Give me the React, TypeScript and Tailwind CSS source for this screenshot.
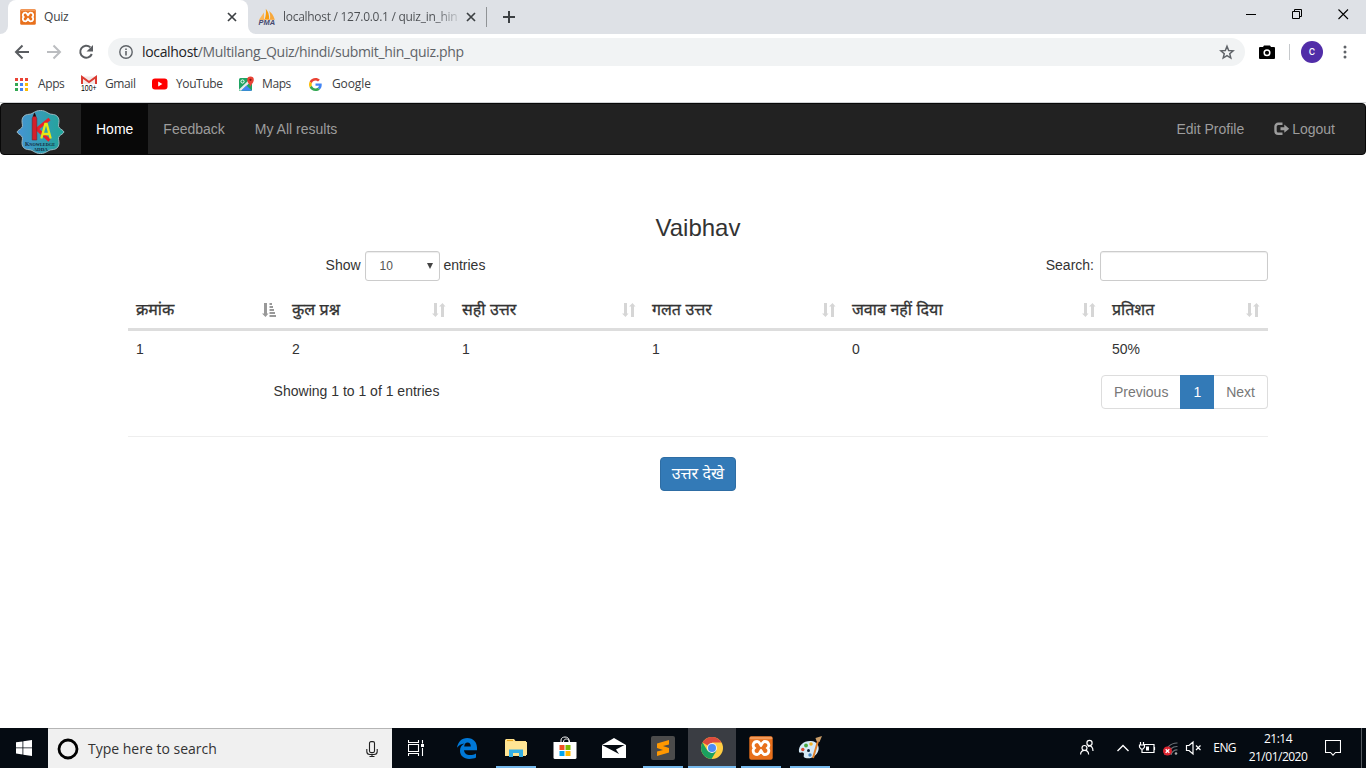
import React from "react";

const UI = "font-['Open_Sans','Noto_Sans',sans-serif]";

function XamppIcon({ className }: { className: string }) {
  return (
    <svg viewBox="0 0 24 24" className={className}>
      <rect x="0.3" y="0.3" width="23.4" height="23.4" rx="2" fill="#e8701c" />
      <rect x="0.8" y="0.8" width="22.4" height="2.5" rx="1" fill="#f39a5a" />
      <path
        d="M8.2 5.500C10.500 5.500 10.800 7.800 12 9.300 13.200 7.800 13.500 5.500 15.800 5.500 20 5.500 20.800 10 18.600 12 20.800 14 20 18.500 15.800 18.500 13.500 18.500 13.200 16.200 12 14.700 10.800 16.200 10.500 18.500 8.200 18.500 4 18.500 3.200 14 5.400 12 3.200 10 4 5.500 8.200 5.500z"
        fill="#e8701c"
        stroke="#fff"
        strokeWidth="2.800"
      />
      <path d="M9 12h6" stroke="#e8701c" strokeWidth="1.500" />
    </svg>
  );
}

function PmaIcon() {
  return (
    <svg viewBox="0 0 18 18" className="h-[18px] w-[18px] shrink-0 overflow-visible">
      <path d="M1.500 11L6 4.500V11z" fill="#fbb659" />
      <path d="M6.800 11C8 8 8.200 4 7.800.8 10.200 3.500 11.200 7 11.200 11z" fill="#f89c0e" />
      <path d="M12 11c.5-3 0-6-1-8 2.500 1.500 4.500 4.500 5.500 8z" fill="#f8a83b" />
      <path d="M1 11h16l-.6.900H1.600z" fill="#f7b45c" />
      <text x="0.500" y="17.300" fontSize="6.500" fontWeight="bold" fontStyle="italic" fontFamily="Liberation Sans" textLength="16.500" lengthAdjust="spacingAndGlyphs" fill="#45486f">PMA</text>
    </svg>
  );
}

function CloseX() {
  return (
    <svg viewBox="0 0 10 10" className="h-[10px] w-[10px] shrink-0">
      <path d="M1 1l8 8M9 1L1 9" stroke="#3c4043" strokeWidth="1.700" />
    </svg>
  );
}

function TabStrip() {
  return (
    <div className="flex h-[34px] bg-[#dee1e6]">
      <div className="w-2 bg-white">
        <div className="h-full rounded-br-lg bg-[#dee1e6]" />
      </div>
      <div className="flex w-[240px] items-center rounded-t-lg bg-white pl-3 pr-[11px]">
        <XamppIcon className="h-4 w-4" />
        <span className="ml-2 text-xs tracking-[-0.2px] text-[#3c4043]">Quiz</span>
        <span className="ml-auto"><CloseX /></span>
      </div>
      <div className="w-[238px] bg-white">
        <div className="flex h-full items-center rounded-bl-lg bg-[#dee1e6] pl-[10px]">
          <PmaIcon />
          <div className="ml-[7px] w-[176px] whitespace-nowrap bg-linear-to-r from-[#4a4d51] from-86% to-[#c8cbd0] bg-clip-text text-xs tracking-[-0.28px] text-transparent">
            localhost / 127.0.0.1 / quiz_in_hin
          </div>
          <span className="ml-[7px]"><CloseX /></span>
        </div>
      </div>
      <div className="mt-[7px] h-5 w-px bg-[#909396]" />
      <svg viewBox="0 0 12 12" className="ml-4 mt-[11px] h-3 w-3">
        <path d="M6 0v12M0 6h12" stroke="#3c4043" strokeWidth="2" />
      </svg>
      <div className="ml-auto flex pr-[17px]">
        <svg viewBox="0 0 103 34" className="h-[34px] w-[103px]" fill="none" stroke="#000">
          <path d="M0 14.500h10" />
          <path d="M46.500 11.500h7v7h-7zM48.500 11.500v-2h7v7h-2" />
          <path d="M92.500 9.500l9.500 9.500M102 9.500L92.500 19" strokeWidth="1.100" />
        </svg>
      </div>
    </div>
  );
}

function Toolbar() {
  return (
    <div className="flex h-9 items-center">
      <svg viewBox="0 0 108 28" className="h-7 w-[108px]" fill="none">
        <path d="M29 14H16.500M22.500 7.500L16 14l6.500 6.500" stroke="#5a5d61" strokeWidth="2" />
        <path d="M47 14h12.500M53.500 7.500L60 14l-6.500 6.500" stroke="#bbbdc0" strokeWidth="2" />
        <path d="M90.300 9.300A6 6 0 1 0 91.800 16" stroke="#5a5d61" strokeWidth="2" />
        <path d="M93 7v6.500h-6.500z" fill="#5a5d61" />
      </svg>
      <div className="flex h-7 w-[1137px] items-center rounded-full bg-[#f1f3f4] pl-[11px] pr-[10px]">
        <svg viewBox="0 0 14 14" className="h-[14px] w-[14px]" fill="none" stroke="#5f6368">
          <circle cx="7" cy="7" r="6.200" strokeWidth="1.400" />
          <path d="M7 6v4.500M7 3.500v1.400" strokeWidth="1.600" />
        </svg>
        <span className="ml-[9px] pb-px text-sm tracking-[-0.33px] text-[#5f6368]"><span className="text-[#202124]">localhost</span>/Multilang_Quiz/hindi/submit_hin_quiz.php</span>
        <svg viewBox="0 0 24 24" className="ml-auto h-4 w-4" fill="none" stroke="#5f6368" strokeWidth="2.200">
          <path d="M12 3.500l2.500 6.200 6.700.5-5.100 4.300 1.600 6.500-5.700-3.600-5.700 3.600 1.600-6.500-5.100-4.300 6.700-.5z" />
        </svg>
      </div>
      <svg viewBox="0 0 16 14" className="ml-[14px] h-[14px] w-4">
        <path d="M5 .5h6l1 1.500h3a1 1 0 0 1 1 1v10a1 1 0 0 1-1 1H1a1 1 0 0 1-1-1V3a1 1 0 0 1 1-1h3z" fill="#000" />
        <circle cx="8" cy="7.800" r="2.800" fill="none" stroke="#fff" strokeWidth="1.500" />
      </svg>
      <div className="ml-[14px] h-4 w-px bg-[#c6c9cc]" />
      <div className="ml-[11px] flex h-[22px] w-[22px] items-center justify-center rounded-full bg-[#512da8] pb-0.5 font-['Roboto',sans-serif] text-xs text-white">c</div>
      <svg viewBox="0 0 4 14" className="ml-5 h-[14px] w-1" fill="#5f6368">
        <circle cx="2" cy="2" r="1.500" /><circle cx="2" cy="7" r="1.500" /><circle cx="2" cy="12" r="1.500" />
      </svg>
    </div>
  );
}

function Bookmarks() {
  const dots = ["#ea4335", "#ea4335", "#ea4335", "#34a853", "#4285f4", "#fbbc05", "#34a853", "#4285f4", "#fbbc05"];
  const label = "text-xs tracking-[-0.4px]";
  return (
    <div className="flex h-[33px] items-center border-b border-[#d0d2d5] pb-1 pl-[15px] text-[#3c4043]">
      <div className="flex w-[66px] items-center">
        <svg viewBox="0 0 13 13" className="mr-[10px] h-[13px] w-[13px]">
          {dots.map((c, i) => <rect key={i} x={(i % 3) * 5} y={Math.floor(i / 3) * 5} width="3" height="3" fill={c} />)}
        </svg>
        <span className={label}>Apps</span>
      </div>
      <div className="flex w-[71px] items-center">
        <svg viewBox="0 0 16 16" className="mr-2 h-4 w-4 overflow-visible">
          <path d="M1 .5h14v7.500H1z" fill="#f3e9e8" />
          <path d="M1 8V1l7 5 7-5v7" fill="none" stroke="#dc3b31" strokeWidth="2" />
          <text x="0" y="15" fontSize="8.500" fontFamily="Liberation Sans" textLength="15.500" lengthAdjust="spacingAndGlyphs" fill="#000">100+</text>
        </svg>
        <span className={label}>Gmail</span>
      </div>
      <div className="flex w-[87px] items-center">
        <svg viewBox="0 0 16 12" className="mr-2 h-3 w-4">
          <rect y=".5" width="15.500" height="11" rx="3" fill="#f00" /><path d="M6.200 3.500v5l4.200-2.500z" fill="#fff" />
        </svg>
        <span className={label}>YouTube</span>
      </div>
      <div className="flex w-[70px] items-center">
        <svg viewBox="0 0 16 16" className="mr-[7px] h-4 w-4">
          <rect x="0" y="2" width="13" height="13" rx="1.500" fill="#1fa463" />
          <path d="M0 13.500L11 3l2 1.500L2 15z" fill="#e8eaed" />
          <path d="M7.500 9.500l5.500 5.300H2z" fill="#4285f4" />
          <circle cx="3.500" cy="5.500" r="1.600" fill="none" stroke="#fff" />
          <path d="M11.500 11C11 8 8.200 7 8.200 3.800a3.300 3.300 0 0 1 6.600 0C14.800 7 12 8 11.500 11z" fill="#ea4335" /><circle cx="11.500" cy="3.800" r="1.100" fill="#811411" />
        </svg>
        <span className={label}>Maps</span>
      </div>
      <div className="flex items-center">
        <svg viewBox="0 0 48 48" className="mr-[10px] h-[13px] w-[13px]">
          <path fill="#EA4335" d="M24 9.500c3.540 0 6.710 1.220 9.210 3.600l6.850-6.850C35.900 2.380 30.470 0 24 0 14.620 0 6.510 5.380 2.560 13.220l7.980 6.190C12.430 13.720 17.740 9.500 24 9.500z" />
          <path fill="#4285F4" d="M46.980 24.550c0-1.570-.15-3.090-.38-4.550H24v9.020h12.940c-.58 2.960-2.260 5.480-4.780 7.180l7.730 6c4.510-4.180 7.090-10.360 7.090-17.650z" />
          <path fill="#FBBC05" d="M10.530 28.590c-.48-1.450-.76-2.990-.76-4.590s.27-3.140.76-4.590l-7.980-6.190C.92 16.460 0 20.120 0 24c0 3.880.92 7.540 2.560 10.780l7.970-6.190z" />
          <path fill="#34A853" d="M24 48c6.480 0 11.930-2.130 15.890-5.810l-7.730-6c-2.150 1.450-4.920 2.300-8.160 2.300-6.260 0-11.570-4.220-13.470-9.910l-7.980 6.190C6.510 42.620 14.620 48 24 48z" />
        </svg>
        <span className="text-xs tracking-[-0.1px]">Google</span>
      </div>
    </div>
  );
}

function BrandLogo() {
  return (
    <svg viewBox="0 0 50 46" className="h-[46px] w-[50px]">
      <defs>
        <linearGradient id="brand"><stop offset="0" stopColor="#4694d4" /><stop offset="1" stopColor="#21a597" /></linearGradient>
      </defs>
      <path d="M25.500 1.500C31.500 1.500 32.500 5 37 5.300 41 5.500 43.700 7.500 44 11.500 44.200 15 42.500 17 44.500 19 46 20.500 48 21 49 23 48 25 46 25.500 44.500 27 42.500 29 44.200 31 44 34.500 43.700 38.500 41 40.500 37 40.700 32.500 41 31.500 44.500 25.500 44.500S18.500 41 14 40.700C10 40.500 7.300 38.500 7 34.500 6.800 31 8.500 29 6.500 27 5 25.500 3 25 2 23 3 21 5 20.500 6.500 19 8.500 17 6.800 15 7 11.500 7.300 7.500 10 5.500 14 5.300 18.500 5 19.500 1.500 25.500 1.500z" fill="url(#brand)" stroke="#9bb9c2" strokeWidth="1" />
      <path d="M34.500 10L22 20l12.500 11.500" fill="none" stroke="#e8202a" strokeWidth="3.200" />
      <path d="M17.200 9.500l2.300-5.500 2.300 5.500V31h-4.600z" fill="#d51f29" stroke="#71212b" strokeWidth=".6" /><path d="M18 7.500l1.500-4L21 7.500z" fill="#111" />
      <path d="M26.300 29.500l4-14.500h1.400l4 14.500M27.800 25h6.600" fill="none" stroke="#e6e817" strokeWidth="2.300" />
      <g fill="#14283a" fontFamily="Liberation Serif" fontWeight="bold">
        <text x="10" y="37" fontSize="5" textLength="30" lengthAdjust="spacingAndGlyphs"><tspan fontSize="6.500">K</tspan>NOWLEDGE</text>
        <text x="18.500" y="42" fontSize="4.800" textLength="14.500" lengthAdjust="spacingAndGlyphs">ADDA</text>
      </g>
    </svg>
  );
}

function Navbar() {
  return (
    <nav className="flex h-[52px] items-stretch rounded border border-[#080808] bg-[#222] text-sm leading-5 text-[#9d9d9d]">
      <div className="w-20 pl-[14px] pt-[5px]"><BrandLogo /></div>
      <a className="bg-[#080808] p-[15px] text-white">Home</a>
      <a className="p-[15px]">Feedback</a>
      <a className="p-[15px]">My All results</a>
      <a className="ml-auto p-[15px]">Edit Profile</a>
      <a className="flex items-center py-[15px] pl-[15px] pr-[30px]">
        <svg viewBox="0 0 16 14" className="mr-0.5 h-[14px] w-4" fill="#9d9d9d">
          <path d="M8.500 1.800H4.200A2.700 2.700 0 0 0 1.500 4.500v4.500a2.700 2.700 0 0 0 2.700 2.700h4.300" fill="none" stroke="#9d9d9d" strokeWidth="2.400" />
          <path d="M6.500 5.200h3.800V2.600L15.200 6.700l-4.900 4.100V8.200H6.500z" />
        </svg>
        Logout
      </a>
    </nav>
  );
}

function SortIcon({ active }: { active: boolean }) {
  return (
    <svg viewBox="0 0 14 14" className={active ? "h-[14px] w-[14px] fill-[#999]" : "h-[14px] w-[14px] fill-[#d6d6d6]"}>
      <path d="M2 0h3v10.500h1.500L3.500 14 0 10.500h2z" />
      {active
        ? <path d="M7.500 0h2.500v2H7.500zM7.500 3h3.500v2H7.500zM7.500 6h4.500v2H7.500zM7.500 9h5.500v2H7.500zM7.500 12H14v2H7.500z" />
        : <path d="M9 14h3V3.500h1.500L10.500 0 7 3.500h2z" />}
    </svg>
  );
}

const columns = [
  { title: "क्रमांक", value: "1" },
  { title: "कुल प्रश्न", value: "2" },
  { title: "सही उत्तर", value: "1" },
  { title: "गलत उत्तर", value: "1" },
  { title: "जवाब नहीं दिया", value: "0" },
  { title: "प्रतिशत", value: "50%" },
];
const grid = "grid grid-cols-[156px_170px_190px_200px_260px_164px]";

function Results() {
  return (
    <main className="ml-32 flex w-[1140px] flex-col pt-[60px] text-sm leading-5 text-[#333]">
      <h3 className="h-[36px] text-center text-2xl leading-[26px]">Vaibhav</h3>
      <div className="flex h-[30px] items-center">
        <div className="flex w-[555px] items-center justify-center whitespace-pre">
          <span className="pb-0.5">Show </span>
          <div className="flex h-[30px] w-[75px] items-center justify-between rounded-[3px] border border-[#ccc] pl-[14px] pr-[5px] text-xs text-[#555] shadow-[inset_0_1px_1px_rgba(0,0,0,.075)]">
            10
            <svg viewBox="0 0 8 8" className="h-2 w-2"><path d="M1 1h6L4 7z" fill="#444" /></svg>
          </div>
          <span className="pb-0.5"> entries</span>
        </div>
        <span className="ml-auto pb-0.5">Search:</span>
        <div className="ml-[6px] h-[30px] w-[168px] rounded-[3px] border border-[#ccc] shadow-[inset_0_1px_1px_rgba(0,0,0,.075)]" />
      </div>
      <div className={grid + " mt-[10px] h-[40px] border-b-[3px] border-[#ddd] text-base leading-5"}>
        {columns.map((c, i) => (
          <div key={c.title} className="flex justify-between pl-2 pr-2 pt-[9px]">
            <span className="whitespace-nowrap [-webkit-text-stroke:0.3px_#333]">{c.title}</span>
            <span className="pt-[3px]"><SortIcon active={i === 0} /></span>
          </div>
        ))}
      </div>
      <div className={grid + " h-[36px]"}>
        {columns.map((c) => <div key={c.title} className="p-2">{c.value}</div>)}
      </div>
      <div className="mt-2 flex h-[34px]">
        <div className="w-[457px] pt-[6px] text-center">Showing 1 to 1 of 1 entries</div>
        <div className="ml-auto flex text-[#777]">
          <div className="rounded-l border border-[#ddd] px-3 py-[6px]">Previous</div>
          <div className="-ml-px border border-[#337ab7] bg-[#337ab7] px-3 py-[6px] text-white">1</div>
          <div className="rounded-r border border-l-0 border-[#ddd] px-3 py-[6px]">Next</div>
        </div>
      </div>
      <hr className="mt-[27px] border-[#eee]" />
      <button className="mt-5 flex h-[34px] w-[76px] items-center justify-center self-center whitespace-nowrap rounded border border-[#2e6da4] bg-[#337ab7] text-base leading-5 text-white">उत्तर देखे</button>
    </main>
  );
}

function Slot({ children, bar, active }: { children: React.ReactNode; bar?: boolean; active?: boolean }) {
  return (
    <div className={active ? "flex h-10 w-12 flex-col items-center bg-[#3a3d43]" : "flex h-10 w-12 flex-col items-center"}>
      <div className="flex h-[38px] items-center pt-[2px]">{children}</div>
      <div className={bar ? (active ? "h-0.5 w-12 bg-[#76b9ed]" : "h-0.5 w-10 bg-[#76b9ed]") : "h-0.5"} />
    </div>
  );
}

function Taskbar() {
  return (
    <footer className={UI + " mt-auto flex h-10 bg-[#050b12] text-white"}>
      <div className="flex w-12 items-center justify-center">
        <svg viewBox="0 0 16 16" className="h-4 w-4" fill="#fff"><path d="M0 2.300l6.500-.9v6.100H0zM7.300 1.300L16 0v7.500H7.300zM0 8.300h6.500v6.200L0 13.600zM7.300 8.300H16V16l-8.700-1.300z" /></svg>
      </div>
      <div className="flex w-[344px] items-center border-t border-[#b5b5b5] bg-[#f0f0f0] pl-[9px] pr-[14px]">
        <svg viewBox="0 0 22 22" className="h-[22px] w-[22px]"><circle cx="11" cy="11" r="9" fill="none" stroke="#000" strokeWidth="2.800" /></svg>
        <span className="ml-[9px] text-sm text-[#333]">Type here to search</span>
        <svg viewBox="0 0 12 16" className="ml-auto h-4 w-3" fill="none" stroke="#222" strokeWidth="1.100"><rect x="3.500" y=".6" width="5" height="11" rx="1.500" /><path d="M.8 8v2.500c0 2 1 3 3 3h4.400c2 0 3-1 3-3V8M6 13.500v2M3.500 15.500h5" /></svg>
      </div>
      <div className="flex w-12 items-center justify-center">
        <svg viewBox="0 0 16 16" className="h-4 w-4" fill="none" stroke="#fff"><path d="M.5 0v2.500h10V0M.5 16v-2.500h10V16M.5 4.500h10v7H.5zM14.500 0v3.500M14.500 8v8" strokeWidth="1.100" /><rect x="13" y="4" width="3" height="3" fill="#fff" stroke="none" /></svg>
      </div>
      <div className="flex gap-px pl-[3px]">
        <Slot>
          <svg viewBox="0 0 20 21" className="h-[21px] w-5" fill="#0078d7"><path d="M0 9.800C.8 4.200 4.500 0 10.300 0 16.500 0 20 4.500 20 9.700v2.500H7c.3 3.200 2.800 4.800 6 4.800 2.200 0 4.300-.6 6-1.600v4.200c-1.800 1-4.400 1.400-6.700 1.400C6.600 21 3 17.500 3 12.800c0-3.500 1.800-6 4.500-7.300C4.500 5.700 1.600 7.400 0 9.800zm7.200-1.200h6.600C13.800 6 12.600 4.600 10.600 4.600S7.500 6.200 7.200 8.600z" /></svg>
        </Slot>
        <Slot bar>
          <svg viewBox="0 0 22 18" className="h-[18px] w-[22px]"><path d="M0 2V1l1-1h8l1.500 2H21v15H0z" fill="#ffe08a" /><path d="M0 3h22v13H0z" fill="#ffe594" /><path d="M2 1h6v1H2z" fill="#e8a61c" /><path d="M4 18v-7.500h14V18h-4v-4H8v4z" fill="#35b0e5" /></svg>
        </Slot>
        <Slot>
          <svg viewBox="0 0 24 24" className="h-6 w-6"><path d="M8 8V4c0-4 8-4 8 0v4M10.500 6c0-4 6-4 6 0" fill="none" stroke="#fff" /><path d="M.5 6h23v15.500a1.500 1.500 0 0 1-1.500 1.500H2a1.500 1.500 0 0 1-1.500-1.500z" fill="#fff" /><path fill="#f25022" d="M6.500 9h5v5h-5z" /><path fill="#7fba00" d="M12.500 9h5v5h-5z" /><path fill="#00a4ef" d="M6.500 15h5v5h-5z" /><path fill="#ffb900" d="M12.500 15h5v5h-5z" /></svg>
        </Slot>
        <Slot>
          <svg viewBox="0 0 24 20" className="h-5 w-6"><path d="M0 7L12 0l12 7v13H0z" fill="#fff" /><path d="M0 7h22.500L14 11.500l3 4.500z" fill="#050b12" /></svg>
        </Slot>
        <Slot bar>
          <svg viewBox="0 0 24 24" className="h-6 w-6"><rect width="24" height="24" rx="2" fill="#4b4b4b" /><path d="M6 7.500l12-3.500v4.500L12 10l6 2v4.500L6 20v-4.500l6-1.500-6-2z" fill="#ff9800" /></svg>
        </Slot>
        <Slot bar active>
          <svg viewBox="0 0 22 22" className="h-[22px] w-[22px]"><circle cx="11" cy="11" r="11" fill="#ffcd42" /><path d="M11 11L1.500 5.500A11 11 0 0 1 20.500 5.500H11z" fill="#dd4b3e" /><path d="M1.500 5.500A11 11 0 0 0 10.500 22l5-8.300L11 11 6.500 13.800z" fill="#1aa15f" /><circle cx="11" cy="11" r="5" fill="#f1f1f1" /><circle cx="11" cy="11" r="4" fill="#4c8bf5" /></svg>
        </Slot>
        <Slot bar><XamppIcon className="h-6 w-6" /></Slot>
        <Slot bar>
          <svg viewBox="0 0 24 24" className="h-6 w-6"><path d="M1 16C0 9.500 6 4.500 13 5c6 .5 8.500 5 7.500 9-1.500 6-7.500 9.500-13 8-3.500-1-.5-3.500-2-5-1.300-1.300-4 .5-4.500-1z" fill="#d5eaf6" /><circle cx="8" cy="9.500" r="1.900" fill="#49a942" /><circle cx="13" cy="8" r="1.800" fill="#f0b428" /><circle cx="4.800" cy="13.500" r="1.700" fill="#dd4a2f" /><circle cx="10.500" cy="14.500" r="1.500" fill="#0b2036" /><circle cx="12" cy="19" r="1.700" fill="#4285c4" /><path d="M20 5l-5 17" stroke="#e0812a" strokeWidth="2" /><path d="M17.500 2L24 0l-2.500 6-3-1z" fill="#c99d68" /></svg>
        </Slot>
      </div>
      <div className="ml-auto flex items-center">
        <svg viewBox="0 0 125 40" className="h-10 w-[125px]" fill="none" stroke="#fff" strokeWidth="1.200">
          <circle cx="4.500" cy="20" r="2.500" /><path d="M.6 26.500c0-5.500 8-5.500 8 0" /><circle cx="9.500" cy="15" r="2.600" /><path d="M8 18.500c3-1.500 5 .5 5 4.500" />
          <path d="M37.500 23l5.500-5.500 5.500 5.500" strokeWidth="1.400" />
          <path d="M64 16.500h10v8H64M74.500 19v3" /><rect x="66" y="18.500" width="3" height="4" fill="#fff" stroke="none" /><path d="M60.500 14v3M63.500 14v3M59.500 17h5v2l-1.500 2h-2l-1.500-2zM62 21v3.500h2" />
          <g stroke="#6e7378"><path d="M85 27a12 12 0 0 1 12.500-12M88 27a9 9 0 0 1 9.500-8.500M91 27a6 6 0 0 1 6.500-5" /></g><circle cx="96" cy="25.500" r="1.300" fill="#aaa" stroke="none" />
          <circle cx="87.500" cy="23" r="4.500" fill="#dc2430" stroke="none" /><path d="M85.700 21.200l3.600 3.600M89.300 21.200l-3.600 3.600" strokeWidth="1.300" />
          <path d="M106.500 17.500h2.500l4-3.500v12l-4-3.500h-2.500zM116 17.500l4.500 4.500M120.500 17.500L116 22" />
        </svg>
        <span className="ml-[8px] text-xs tracking-[-0.6px]">ENG</span>
        <div className="ml-3 w-[60px] text-center text-xs leading-[18px] tracking-[-0.5px]"><div>21:14</div><div>21/01/2020</div></div>
        <svg viewBox="0 0 16 16" className="ml-[17px] h-4 w-4" fill="none" stroke="#fff" strokeWidth="1.100"><path d="M.5 .5h15v12h-5L8 15.200 5.500 12.500h-5z" /></svg>
        <div className="ml-5 mr-1 h-10 w-px bg-[#555a60]" />
      </div>
    </footer>
  );
}

export default function App() {
  return (
    <div className="flex h-screen w-full flex-col overflow-hidden bg-white font-['Liberation_Sans','Noto_Sans_Devanagari','Noto_Sans',sans-serif]">
      <header className={UI}>
        <TabStrip />
        <Toolbar />
        <Bookmarks />
      </header>
      <Navbar />
      <Results />
      <Taskbar />
    </div>
  );
}
